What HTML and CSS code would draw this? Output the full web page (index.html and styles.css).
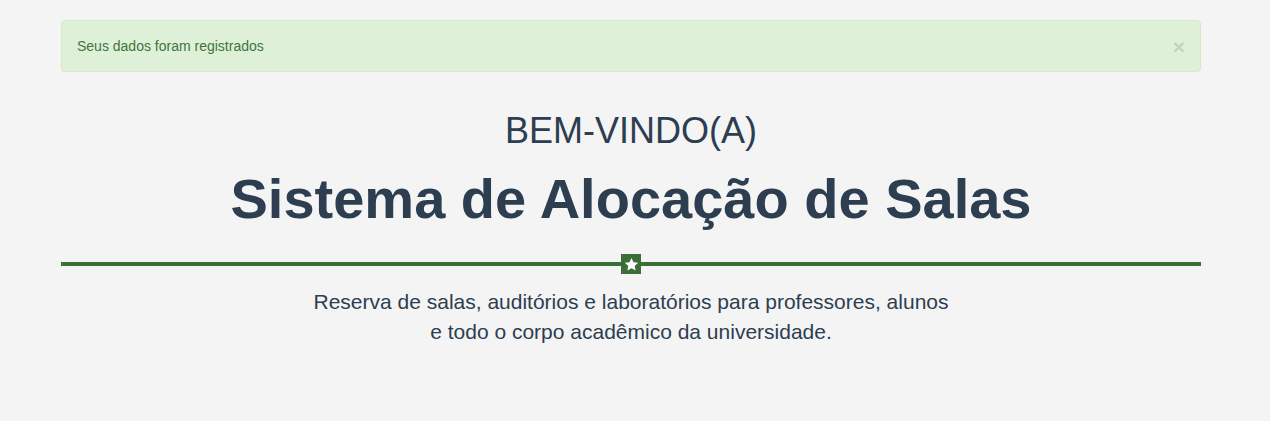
FILE: index.html
```html
<!DOCTYPE html>
<html lang="pt">
<head>
<meta charset="utf-8">
<title>Sistema de Alocação de Salas</title>
<link rel="stylesheet" href="styles.css">
</head>
<body>
<div class="page">
<div class="container">
  <div class="alert">
    <span class="alert-text">Seus dados foram registrados</span>
    <span class="close">×</span>
  </div>
  <header class="intro">
    <h2 class="welcome">BEM-VINDO(A)</h2>
    <h1 class="title">Sistema de Alocação de Salas</h1>
    <div class="divider">
      <span class="line"></span>
      <span class="star-box">
        <svg width="15" height="15" viewBox="0 0 24 24"><path fill="#fff" d="M12 1.5l3.2 6.9 7.5.8-5.6 5.1 1.6 7.4L12 17.9l-6.7 3.8 1.6-7.4-5.6-5.1 7.5-.8z"/></svg>
      </span>
      <span class="line"></span>
    </div>
    <p class="subtitle">Reserva de salas, auditórios e laboratórios para professores, alunos e todo o corpo acadêmico da universidade.</p>
  </header>
</div>
</div>
</body>
</html>
```
FILE: styles.css
```css
html, body {
  margin: 0;
  padding: 0;
  background: #f4f4f4;
  font-family: "Liberation Sans", Arial, sans-serif;
  color: #2c3e50;
}
.page {
  padding-right: 8px;
}
.container {
  width: 1140px;
  margin: 0 auto;
  padding-top: 20px;
}
.alert {
  display: flex;
  justify-content: space-between;
  align-items: center;
  height: 50px;
  padding: 0 15px;
  background: #dff0d8;
  border: 1px solid #d6e9c6;
  border-radius: 4px;
  color: #3c763d;
  font-size: 14px;
}
.close {
  font-size: 21px;
  font-weight: bold;
  color: #000;
  opacity: 0.12;
  line-height: 1;
}
.intro {
  text-align: center;
}
.welcome {
  margin: 39px 0 0;
  font-size: 36px;
  font-weight: normal;
  line-height: 40px;
}
.title {
  margin: 18px 0 0;
  font-size: 56px;
  font-weight: bold;
  line-height: 60px;
}
.divider {
  display: flex;
  align-items: center;
  margin-top: 25px;
  height: 20px;
}
.line {
  flex: 1;
  height: 4px;
  background: #3c6e37;
}
.star-box {
  width: 20px;
  height: 20px;
  background: #3c6e37;
  display: flex;
  align-items: center;
  justify-content: center;
}
.subtitle {
  max-width: 645px;
  margin: 13px auto 0;
  font-size: 21px;
  line-height: 30px;
}
```
